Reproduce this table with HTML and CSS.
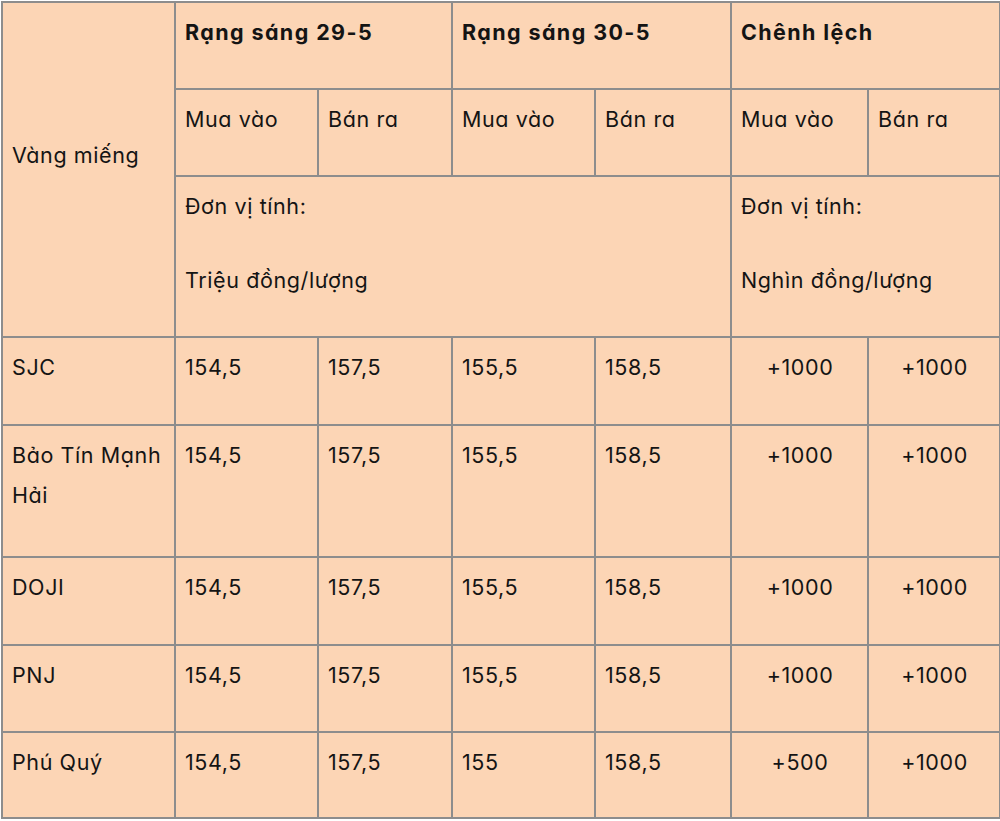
FILE: index.html
```html
<!DOCTYPE html>
<html lang="vi">
<head>
<meta charset="utf-8">
<title>Giá vàng miếng</title>
<link rel="stylesheet" href="styles.css">
</head>
<body>
<table class="gold">
  <colgroup>
    <col class="c-name"><col class="c1"><col class="c2"><col class="c3"><col class="c4"><col class="c5"><col class="c6">
  </colgroup>
  <tbody>
    <tr class="h1">
      <td class="mid" rowspan="3"><p>Vàng miếng</p></td>
      <td colspan="2"><p><strong>Rạng sáng 29-5</strong></p></td>
      <td colspan="2"><p><strong>Rạng sáng 30-5</strong></p></td>
      <td colspan="2"><p><strong>Chênh lệch</strong></p></td>
    </tr>
    <tr class="h2">
      <td><p>Mua vào</p></td>
      <td><p>Bán ra</p></td>
      <td><p>Mua vào</p></td>
      <td><p>Bán ra</p></td>
      <td><p>Mua vào</p></td>
      <td><p>Bán ra</p></td>
    </tr>
    <tr class="h3">
      <td colspan="4"><p>Đơn vị tính:</p><p>Triệu đồng/lượng</p></td>
      <td colspan="2"><p>Đơn vị tính:</p><p>Nghìn đồng/lượng</p></td>
    </tr>
    <tr class="r1">
      <td><p>SJC</p></td>
      <td><p>154,5</p></td><td><p>157,5</p></td>
      <td><p>155,5</p></td><td><p>158,5</p></td>
      <td class="ctr"><p>+1000</p></td><td class="ctr"><p>+1000</p></td>
    </tr>
    <tr class="r2">
      <td><p>Bảo Tín Mạnh Hải</p></td>
      <td><p>154,5</p></td><td><p>157,5</p></td>
      <td><p>155,5</p></td><td><p>158,5</p></td>
      <td class="ctr"><p>+1000</p></td><td class="ctr"><p>+1000</p></td>
    </tr>
    <tr class="r3">
      <td><p>DOJI</p></td>
      <td><p>154,5</p></td><td><p>157,5</p></td>
      <td><p>155,5</p></td><td><p>158,5</p></td>
      <td class="ctr"><p>+1000</p></td><td class="ctr"><p>+1000</p></td>
    </tr>
    <tr class="r4">
      <td><p>PNJ</p></td>
      <td><p>154,5</p></td><td><p>157,5</p></td>
      <td><p>155,5</p></td><td><p>158,5</p></td>
      <td class="ctr"><p>+1000</p></td><td class="ctr"><p>+1000</p></td>
    </tr>
    <tr class="r5">
      <td><p>Phú Quý</p></td>
      <td><p>154,5</p></td><td><p>157,5</p></td>
      <td><p>155</p></td><td><p>158,5</p></td>
      <td class="ctr"><p>+500</p></td><td class="ctr"><p>+1000</p></td>
    </tr>
  </tbody>
</table>
</body>
</html>
```
FILE: styles.css
```css
html, body {
  margin: 0;
  padding: 0;
  background: #ffffff;
}

.gold {
  margin: 1px 0 0 1px;
  width: 998px;
  table-layout: fixed;
  border-collapse: collapse;
  border: 2px solid #8d8d8d;
  background: #fcd5b5;
  font-family: Inter, "Noto Sans", sans-serif;
  font-feature-settings: "cv11" 1;
  font-size: 21.5px;
  line-height: 40px;
  letter-spacing: 0.6px;
  color: #141414;
}

.c-name { width: 173px; }
.c1 { width: 143px; }
.c2 { width: 134px; }
.c3 { width: 143px; }
.c4 { width: 136px; }
.c5 { width: 137px; }
.c6 { width: 132px; }

.gold td {
  border: 2px solid #8d8d8d;
  padding: 9px 8px 2px 9px;
  vertical-align: top;
  text-align: left;
}

.gold p {
  margin: 0 0 34px 0;
}

.gold td p:last-child {
  margin-bottom: 0;
}

.gold td.mid {
  vertical-align: middle;
}

.gold td.mid p {
  margin-bottom: 36px;
}

.gold td.ctr {
  text-align: center;
}

.gold strong {
  font-weight: 700;
  letter-spacing: 1.4px;
}

.h1 { height: 87px; }
.h2 { height: 87px; }
.h3 { height: 161px; }
.r1 { height: 88px; }
.r2 { height: 132px; }
.r3 { height: 88px; }
.r4 { height: 87px; }
.r5 { height: 86px; }
```
